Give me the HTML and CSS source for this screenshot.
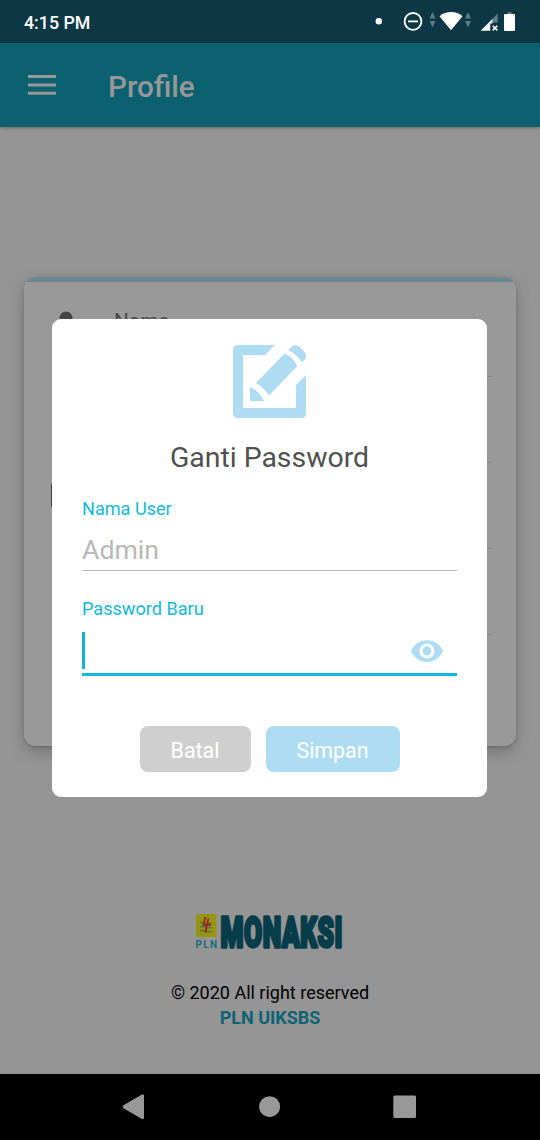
FILE: index.html
```html
<!DOCTYPE html>
<html lang="id">
<head>
<meta charset="utf-8">
<title>Profile</title>
<link rel="stylesheet" href="styles.css">
</head>
<body>
<div class="screen">
  <header class="status">
    <span class="clock">4:15 PM</span>
    <svg class="status-icons" width="180" height="43" viewBox="0 0 180 43">
      <circle cx="18.8" cy="21.3" r="3.2" fill="#fff"/>
      <circle cx="53" cy="21.4" r="8.4" fill="none" stroke="#fff" stroke-width="1.8"/>
      <path d="M48 21.4h10" stroke="#fff" stroke-width="1.8"/>
      <path d="M69.5 18.5l3-6.5 3 6.5zM69.5 21l3 6.5 3-6.5zM105 18.5l3-6.5 3 6.5zM105 21l3 6.5 3-6.5z" fill="#5f7b86"/>
      <path d="M79.5 16.2Q84.5 12 91 12t11.500 4.200L91 30.300z" fill="#fff"/>
      <path d="M137.700 13.500v9h-5.500v-3.500z" fill="#5f7b86"/>
      <path d="M120.700 30.800l11.700-11.800v4.500h-2.200v7.300z" fill="#fff"/>
      <path d="M132.700 25.800l4.600 4.600m0-4.600l-4.600 4.600" stroke="#fff" stroke-width="1.600"/>
      <path d="M147.500 12h4v2.500h-4z" fill="#5f7b86"/>
      <rect x="144" y="14" width="11" height="17" rx="1" fill="#fff"/>
    </svg>
  </header>
  <div class="appbar">
    <svg width="28" height="20" viewBox="0 0 28 20"><path d="M0 1.500h28M0 10h28M0 18.200h28" stroke="#979797" stroke-width="3"/></svg>
    <h1 class="title">Profile</h1>
  </div>
  <main class="content">
    <section class="card">
      <div class="row">
        <svg class="person" width="28" height="28" viewBox="0 0 28 28"><circle cx="14" cy="7" r="6.500"/><path d="M1 27v-3c0-9 26-9 26 0v3z"/></svg>
        <span>Nama</span>
      </div>
      <div class="row"></div>
      <div class="row"><span class="square-icon"></span></div>
      <div class="row"></div>
    </section>
    <footer class="footer">
      <svg class="brand" width="150" height="60" viewBox="0 -10 150 60">
        <rect x="1" y="2" width="20.500" height="23" fill="#969511"/>
        <path d="M5 11q2.500-1.500 5 0t7 0M5 15.200q2.500-1.500 5 0t7 0M5 19.200q2.500-1.500 5 0t7 0" fill="none" stroke="#3d7053" stroke-width="1.200"/>
        <path d="M10.500 5L8.300 12.800h3.500L10.500 20.500M10.500 13h5l-3.300-1.500 1.300-5" fill="none" stroke="#9e2420" stroke-width="1.800"/>
        <text class="pln" x="0.500" y="35.500" textLength="21.500">PLN</text>
        <text class="monaksi" transform="translate(25.500 34.500) scale(.61 1)" textLength="200" lengthAdjust="spacing">MONAKSI</text>
      </svg>
      <p class="copyright">© 2020 All right reserved</p>
      <p class="company">PLN UIKSBS</p>
    </footer>
  </main>
  <nav class="navbar">
    <svg width="540" height="66" viewBox="0 0 540 66" fill="#989898">
      <path d="M124 32l18-10.500h1v22.500h-1L124 33.500z" stroke="#989898" stroke-width="2" stroke-linejoin="round"/>
      <circle cx="269.600" cy="32.700" r="10.500"/>
      <rect x="393.300" y="21.500" width="22.700" height="22.500" rx="1.500"/>
    </svg>
  </nav>
  <div class="dialog" role="dialog">
    <svg class="edit" width="74" height="74" viewBox="0 0 74 74">
      <path fill="#aedcf2" d="M42 0L32 10H10v53h53V40l10-10v38q0 5-5 5H5q-5 0-5-5V5q0-5 5-5z"/>
      <path fill="#aedcf2" d="M51.500 8.500Q60.500 12.500 64.300 21.300L36 50.500Q31 42.500 23 38zM55 5L58 2Q62-1.500 67 2L70.500 5.500Q74 10 72.500 14L68.700 17.500Q64 9 55 5zM17 41.800Q26 46 31 56H17z"/>
    </svg>
    <h2 class="dialog-title">Ganti Password</h2>
    <label class="label">Nama User</label>
    <div class="input disabled">Admin</div>
    <label class="label second">Password Baru</label>
    <div class="input active">
      <span class="caret"></span>
      <svg width="32" height="22" viewBox="0 0 32 22"><path d="M0 11C6-3.500 26-3.500 32 11 26 25.500 6 25.500 0 11z" fill="#aedcf2"/><circle cx="16" cy="11" r="6" fill="#aedcf2" stroke="#fff" stroke-width="3"/></svg>
    </div>
    <div class="buttons">
      <button class="button cancel">Batal</button>
      <button class="button save">Simpan</button>
    </div>
  </div>
</div>
</body>
</html>
```
FILE: styles.css
```css
* { box-sizing: border-box; }
body, h1, h2, p { margin: 0; }
body { font-family: Roboto, sans-serif; }
.screen { position: relative; width: 540px; height: 1140px; overflow: hidden; background: #959595; display: flex; flex-direction: column; }
.status { height: 43px; background: #0e3745; color: #fff; display: flex; justify-content: space-between; align-items: center; padding-left: 24px; flex: none; }
.clock { font-size: 17.800px; font-weight: 500; line-height: 43px; padding-top: 2px; }
.appbar { height: 84px; flex: none; background: #0c6170; display: flex; align-items: center; padding: 0 28px; gap: 52px; box-shadow: 0 1px 3px rgba(0,0,0,.3); }
.title { color: #979797; font-size: 29.700px; font-weight: 500; line-height: 40px; padding-top: 3px; }
.content { flex: 1; padding: 150px 24px 0; }
.card { height: 469px; background: linear-gradient(#6a8793 5px, #999 5px); border-radius: 12px; padding: 14px 24px 0 28px; box-shadow: 0 6px 16px rgba(0,0,0,.23), 0 1px 3px rgba(0,0,0,.15); }
.row { height: 86px; border-bottom: 1px solid #858585; display: flex; align-items: flex-start; padding-top: 18px; gap: 34px; font-size: 20.800px; color: #484848; }
.person { fill: #434343; margin-top: 2px; }
.square-icon { width: 30px; height: 27px; border: 3px solid #3d3d3d; border-radius: 4px; margin: 1px 0 0 -1px; }
.footer { display: flex; flex-direction: column; align-items: center; padding-top: 156px; }
.brand { display: block; overflow: visible; }
.pln { font: 700 10px Roboto, sans-serif; fill: #146f83; }
.monaksi { font: 900 43px Roboto, sans-serif; fill: #073d4b; stroke: #073d4b; stroke-width: 3.500px; stroke-linejoin: round; }
.copyright { margin-top: 19px; font-size: 18px; line-height: 24px; color: #000; }
.company { font-size: 18px; line-height: 24px; font-weight: 700; color: #0e6474; margin-top: 1px; }
.navbar { height: 66px; flex: none; background: #000; }
.navbar svg { display: block; }
.dialog { position: absolute; left: 52px; top: 319px; width: 435px; height: 478px; background: #fff; border-radius: 9px; padding: 26px 30px 0; display: flex; flex-direction: column; }
.edit { align-self: center; flex: none; }
.dialog-title { align-self: center; margin-top: 21px; font-size: 28.400px; line-height: 36px; font-weight: 400; color: #505050; }
.label { color: #11b9dc; font-size: 18.100px; line-height: 22px; margin-top: 22px; }
.label.second { margin-top: 27px; }
.input { height: 51px; }
.disabled { border-bottom: 1px solid #b8b8b8; font-size: 26.700px; line-height: 60px; color: #b9b9b9; }
.active { height: 56px; border-bottom: 3px solid #12b9dc; display: flex; justify-content: space-between; align-items: center; padding: 8px 14px 0 0; }
.caret { width: 3px; height: 37px; background: #12b5da; }
.buttons { display: flex; justify-content: center; gap: 15px; margin-top: 50px; }
.button { height: 46px; border: 0; border-radius: 8px; color: #fff; font: 400 21.400px Roboto, sans-serif; padding: 3px 0 0; }
.cancel { width: 111px; background: #cfcfcf; }
.save { width: 134px; background: #aedcf2; }
```
